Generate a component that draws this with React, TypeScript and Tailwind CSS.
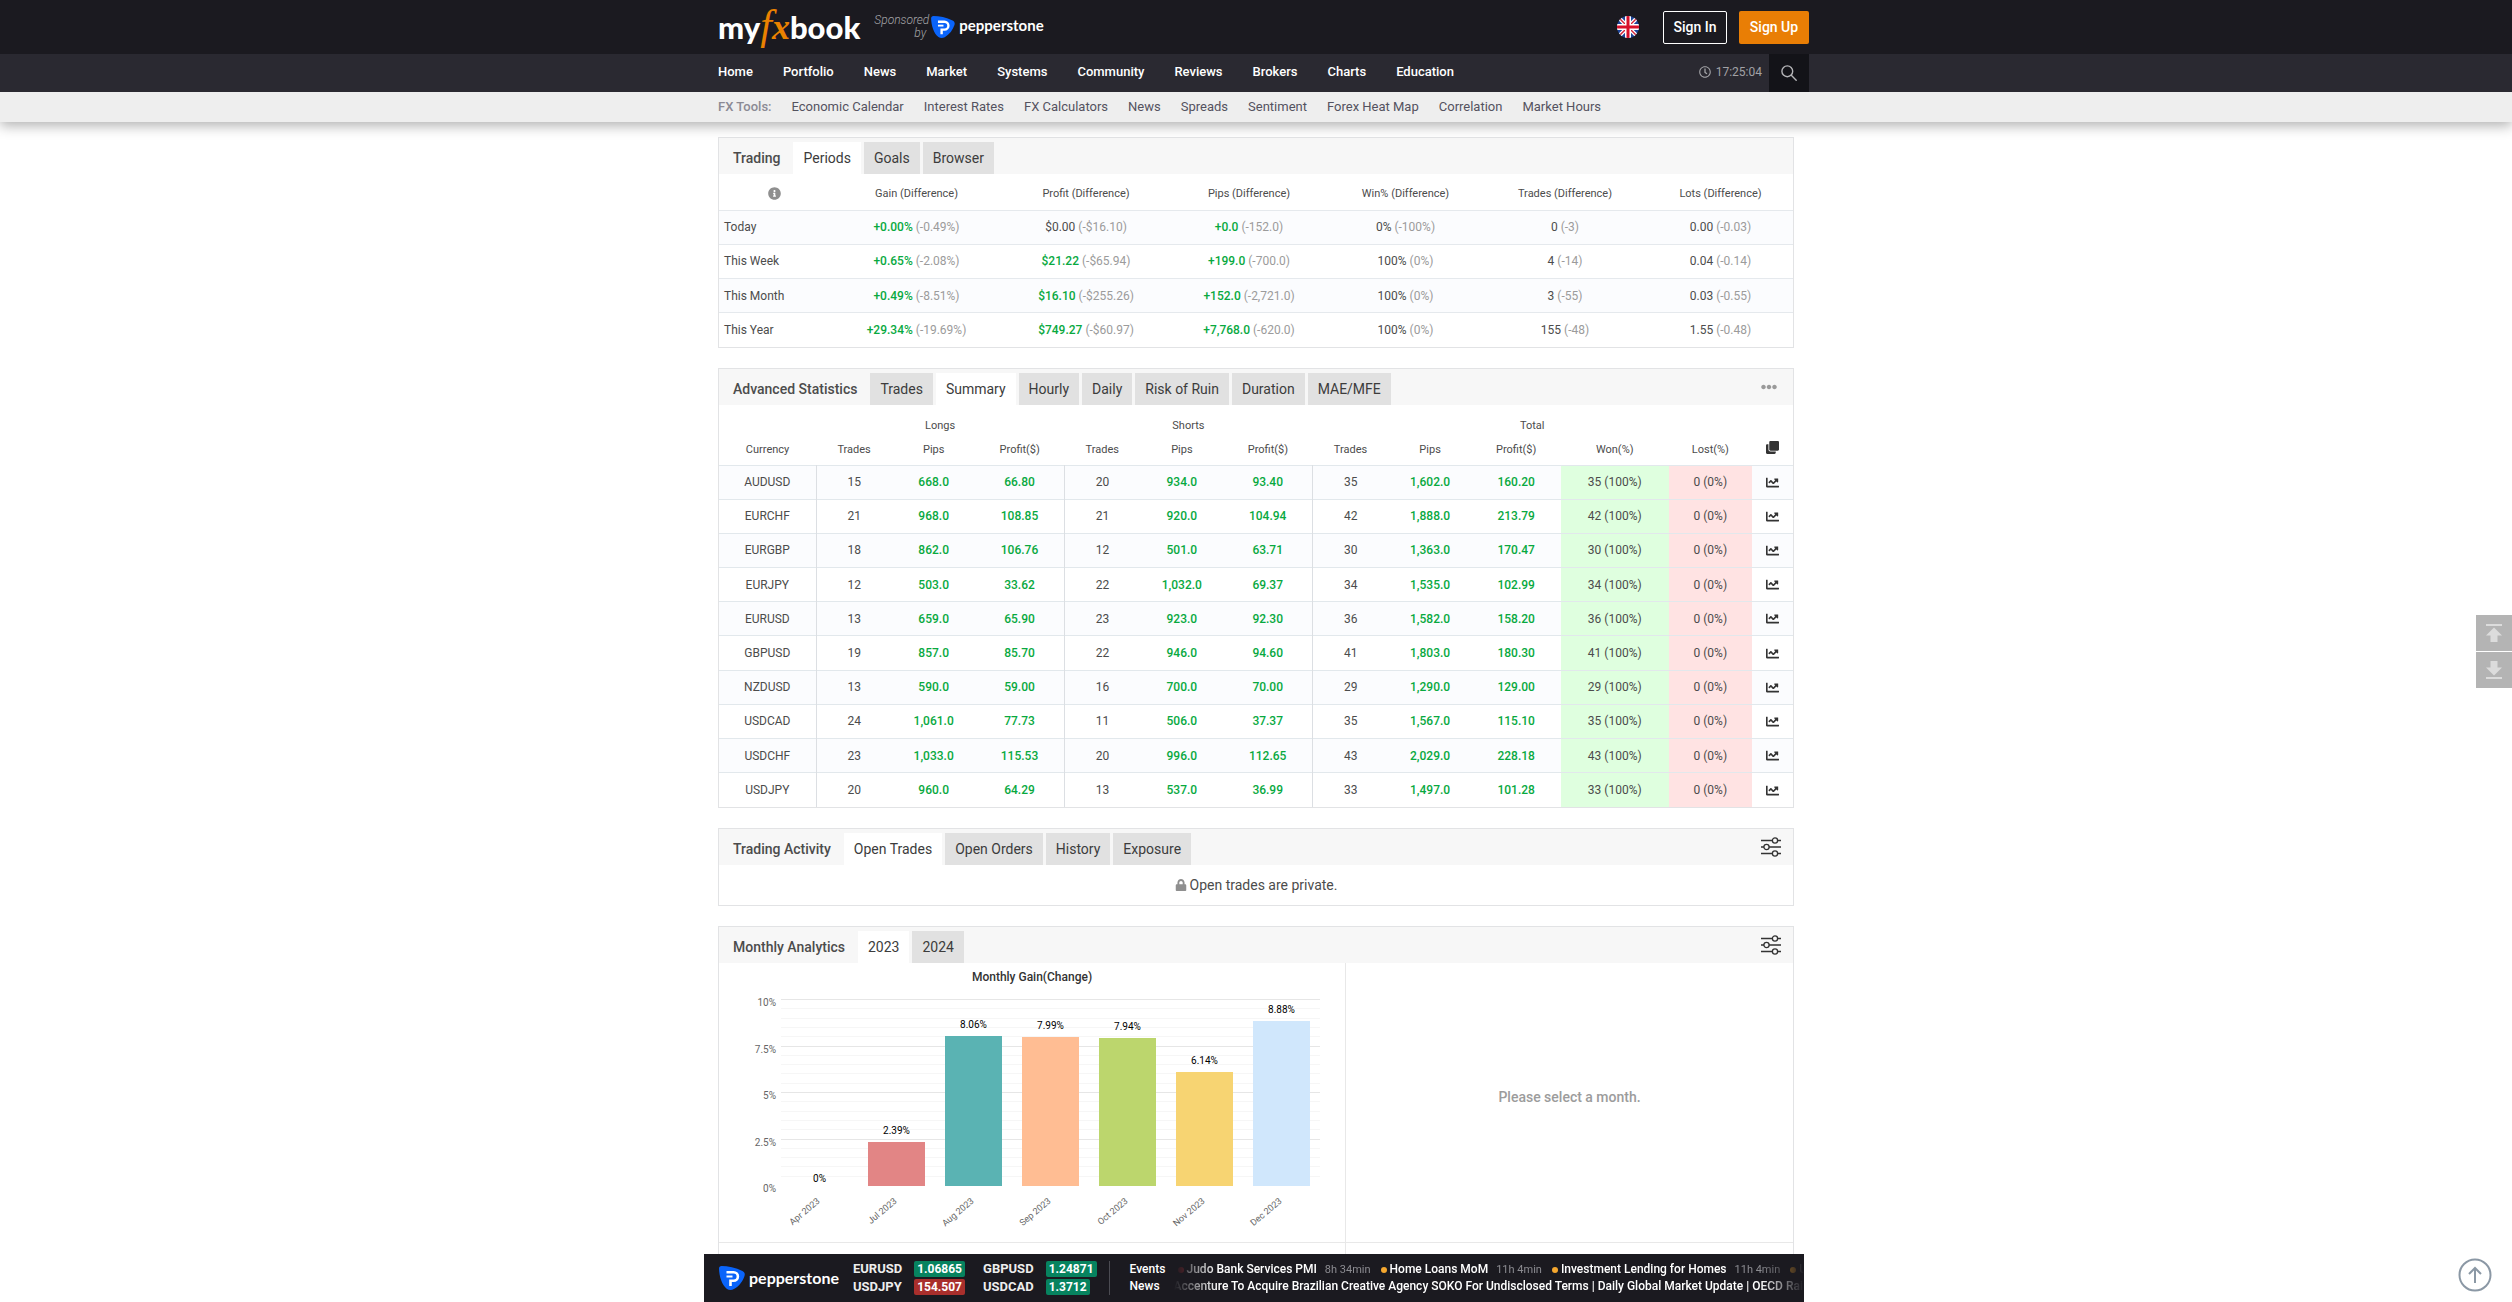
import { FaChartLine, FaClone, FaEllipsisH, FaInfoCircle, FaLock, FaRegClock } from 'react-icons/fa'

// ── Data ──
const NAV = ['Home', 'Portfolio', 'News', 'Market', 'Systems', 'Community', 'Reviews', 'Brokers', 'Charts', 'Education']
const TOOLS = [
  'Economic Calendar', 'Interest Rates', 'FX Calculators', 'News', 'Spreads',
  'Sentiment', 'Forex Heat Map', 'Correlation', 'Market Hours',
]

const PERIOD_HEADS = ['Gain', 'Profit', 'Pips', 'Win%', 'Trades', 'Lots']
const PERIODS = [
  { name: 'Today', cells: [['+0.00%', '-0.49%'], ['$0.00', '-$16.10'], ['+0.0', '-152.0'], ['0%', '-100%'], ['0', '-3'], ['0.00', '-0.03']] },
  { name: 'This Week', cells: [['+0.65%', '-2.08%'], ['$21.22', '-$65.94'], ['+199.0', '-700.0'], ['100%', '0%'], ['4', '-14'], ['0.04', '-0.14']] },
  { name: 'This Month', cells: [['+0.49%', '-8.51%'], ['$16.10', '-$255.26'], ['+152.0', '-2,721.0'], ['100%', '0%'], ['3', '-55'], ['0.03', '-0.55']] },
  { name: 'This Year', cells: [['+29.34%', '-19.69%'], ['$749.27', '-$60.97'], ['+7,768.0', '-620.0'], ['100%', '0%'], ['155', '-48'], ['1.55', '-0.48']] },
]

// currency, longs (trades, pips, profit), shorts (...), total (...)
const SUMMARY = [
  ['AUDUSD', '15', '668.0', '66.80', '20', '934.0', '93.40', '35', '1,602.0', '160.20'],
  ['EURCHF', '21', '968.0', '108.85', '21', '920.0', '104.94', '42', '1,888.0', '213.79'],
  ['EURGBP', '18', '862.0', '106.76', '12', '501.0', '63.71', '30', '1,363.0', '170.47'],
  ['EURJPY', '12', '503.0', '33.62', '22', '1,032.0', '69.37', '34', '1,535.0', '102.99'],
  ['EURUSD', '13', '659.0', '65.90', '23', '923.0', '92.30', '36', '1,582.0', '158.20'],
  ['GBPUSD', '19', '857.0', '85.70', '22', '946.0', '94.60', '41', '1,803.0', '180.30'],
  ['NZDUSD', '13', '590.0', '59.00', '16', '700.0', '70.00', '29', '1,290.0', '129.00'],
  ['USDCAD', '24', '1,061.0', '77.73', '11', '506.0', '37.37', '35', '1,567.0', '115.10'],
  ['USDCHF', '23', '1,033.0', '115.53', '20', '996.0', '112.65', '43', '2,029.0', '228.18'],
  ['USDJPY', '20', '960.0', '64.29', '13', '537.0', '36.99', '33', '1,497.0', '101.28'],
]

const MONTHS = [
  { name: 'Apr 2023', gain: 0, color: '#E08283' },
  { name: 'Jul 2023', gain: 2.39, color: '#E28585' },
  { name: 'Aug 2023', gain: 8.06, color: '#5AB3B3' },
  { name: 'Sep 2023', gain: 7.99, color: '#FFBD93' },
  { name: 'Oct 2023', gain: 7.94, color: '#BCD66D' },
  { name: 'Nov 2023', gain: 6.14, color: '#F7D472' },
  { name: 'Dec 2023', gain: 8.88, color: '#D0E7FC' },
]

const EVENTS = [
  { name: 'Judo Bank Services PMI', time: '8h 34min', dot: 'bg-[#d9363e]' },
  { name: 'Home Loans MoM', time: '11h 4min', dot: 'bg-[#f5a72f]' },
  { name: 'Investment Lending for Homes', time: '11h 4min', dot: 'bg-[#f5a72f]' },
  { name: 'Unemployment Rate', time: '11h 4min', dot: 'bg-[#f5a72f]' },
]
const NEWS = [
  'Accenture To Acquire Brazilian Creative Agency SOKO For Undisclosed Terms',
  'Daily Global Market Update',
  'OECD Raises Global Growth Outlook',
]

// ── Logos and icons ──
function Shield({ className }: { className: string }) {
  return (
    <svg viewBox="0 0 26 24" className={className} aria-hidden="true">
      <path d="M2.6 0C8.600 0 17 1.600 23.400 4.900C25.600 6 26.200 7.600 25.500 9.900C23.800 15.300 20 20.300 14.900 23.100C12.600 24.300 10.200 24.300 8 22.900C3 19.300.200 10 0 2.700C0 1 .900 0 2.600 0Z" fill="#0A64FA" />
      <path d="M7.500 6.200H14.600A4 4 0 0 1 14.600 14.800H11.500V20" fill="none" stroke="#fff" strokeWidth="2.600" />
      <path d="M7.500 10.500H13.500" stroke="#fff" strokeWidth="2" />
    </svg>
  )
}

function UkFlag() {
  return (
    <svg viewBox="0 0 22 22" className="size-[22px]" aria-hidden="true">
      <clipPath id="flag"><circle cx="11" cy="11" r="11" /></clipPath>
      <g clipPath="url(#flag)">
        <rect width="22" height="22" fill="#1B4398" />
        <path d="M0 0L22 22M22 0L0 22" stroke="#fff" strokeWidth="4" />
        <path d="M0 0L22 22M22 0L0 22" stroke="#D22238" strokeWidth="1.400" />
        <path d="M11 0V22M0 11H22" stroke="#fff" strokeWidth="6" />
        <path d="M11 0V22M0 11H22" stroke="#D8102A" strokeWidth="3" />
      </g>
    </svg>
  )
}

function SearchIcon() {
  return (
    <svg viewBox="0 0 16 16" className="size-4" fill="none" stroke="#b5b5b8" strokeWidth="1.400" strokeLinecap="round" aria-hidden="true">
      <circle cx="6.300" cy="6.300" r="5.400" />
      <path d="M10.300 10.300L15.200 15.200" />
    </svg>
  )
}

function Sliders() {
  return (
    <svg viewBox="0 0 20 20" className="size-5" fill="none" stroke="#333" strokeWidth="1.300" aria-hidden="true">
      <path d="M0 3.500H11.500M16.500 3.500H20M0 10H3M8 10H20M0 16.500H11.500M16.500 16.500H20" />
      <circle cx="14" cy="3.500" r="2.600" />
      <circle cx="5.500" cy="10" r="2.600" />
      <circle cx="14" cy="16.500" r="2.600" />
    </svg>
  )
}

function EndArrow({ down }: { down?: boolean }) {
  return (
    <svg viewBox="0 0 16 18" className={down ? 'h-[18px] w-4 rotate-180' : 'h-[18px] w-4'} fill="#dcdcdc" aria-hidden="true">
      <rect width="16" height="2" />
      <path d="M8 3.500L16 11.500H11.500V18H4.500V11.500H0Z" />
    </svg>
  )
}

// ── Panel with its tab strip ──
function Panel({ title, tabs, active, action, children }: {
  title: string
  tabs: string[]
  active: string
  action?: React.ReactNode
  children: React.ReactNode
}) {
  return (
    <section className="border border-[#e2e3e5] bg-white">
      <div className="flex items-end bg-[#f7f7f7] pt-1">
        <h2 className="self-center pr-[13px] pl-[14px] text-sm font-medium">{title}</h2>
        <div role="tablist" className="flex gap-[3px]">
          {tabs.map((t) => (
            <button
              key={t}
              role="tab"
              aria-selected={t === active}
              className={`h-8 px-[10px] text-sm text-[#3c3c3c] ${t === active ? 'bg-white' : 'bg-[#e1e1e1]'}`}
            >
              {t}
            </button>
          ))}
        </div>
        <div className="ml-auto self-center pr-3 pb-1">{action}</div>
      </div>
      {children}
    </section>
  )
}

function PeriodsTable() {
  return (
    <table className="h-[173px] w-full table-fixed border-collapse text-center text-xs">
      <colgroup>
        <col className="w-[111px]" />
        <col className="w-[173px]" />
        <col className="w-[166px]" />
        <col className="w-[160px]" />
        <col className="w-[153px]" />
        <col className="w-[166px]" />
        <col className="w-[145px]" />
      </colgroup>
      <thead>
        <tr className="h-9 text-[11px]">
          <th className="pt-1"><FaInfoCircle className="mx-auto size-[13px] text-[#8f8f8f]" title="Info" /></th>
          {PERIOD_HEADS.map((h) => (
            <th key={h} className="pt-1.5 font-normal">{h} (Difference)</th>
          ))}
        </tr>
      </thead>
      <tbody>
        {PERIODS.map((row) => (
          <tr key={row.name} className="h-[34px] border-t border-[#e5e9ed] odd:bg-[#fbfcfe]">
            <td className="pl-[5px] text-left">{row.name}</td>
            {row.cells.map(([value, diff], i) => (
              <td key={i}>
                <span className={i < 3 && value !== '$0.00' ? 'font-medium text-[#09a93f]' : ''}>{value}</span>{' '}
                <span className="text-[#9b9b9b]">({diff})</span>
              </td>
            ))}
          </tr>
        ))}
      </tbody>
    </table>
  )
}

function SummaryTable() {
  return (
    <table className="h-[402px] w-full table-fixed border-collapse text-center text-xs">
      <colgroup>
        <col className="w-[97px]" />
        {[0, 1, 2].map((g) => [
          <col key={`t${g}`} className="w-[76px]" />,
          <col key={`p${g}`} className="w-[83px]" />,
          <col key={`m${g}`} className="w-[89px]" />,
        ])}
        <col className="w-[108px]" />
        <col className="w-[83px]" />
        <col className="w-[41px]" />
      </colgroup>
      <thead className="text-[11px] leading-4">
        <tr className="h-8 align-bottom">
          <th />
          <th colSpan={3} className="pb-[3px] font-normal">Longs</th>
          <th colSpan={3} className="pb-[3px] font-normal">Shorts</th>
          <th colSpan={5} className="pb-[3px] font-normal">Total</th>
          <th />
        </tr>
        <tr className="h-7 align-top">
          {['Currency', 'Trades', 'Pips', 'Profit($)', 'Trades', 'Pips', 'Profit($)', 'Trades', 'Pips', 'Profit($)', 'Won(%)', 'Lost(%)'].map((h, i) => (
            <th key={i} className="pt-[5px] font-normal">{h}</th>
          ))}
          <th className="pt-1"><FaClone className="mx-auto size-[13px] text-[#333]" title="Copy" /></th>
        </tr>
      </thead>
      <tbody>
        {SUMMARY.map((row) => (
          <tr key={row[0]} className="h-[34px] border-t border-[#e2e8ec] odd:bg-[#fbfcfe]">
            {row.map((value, i) => (
              <td
                key={i}
                className={`${i % 3 === 0 && i < 9 ? 'border-r border-[#dcdfe3]' : ''} ${i > 0 && i % 3 !== 1 ? 'font-medium text-[#09a93f]' : ''}`}
              >
                {value}
              </td>
            ))}
            <td className="bg-[#dfffdf]">{row[7]} (100%)</td>
            <td className="bg-[#ffe3e3]">0 (0%)</td>
            <td><FaChartLine className="mx-auto size-[13px] text-[#333]" title="Chart" /></td>
          </tr>
        ))}
      </tbody>
    </table>
  )
}

// ── Monthly gain chart ──
const PLOT = { left: 62, right: 601, top: 37, bottom: 223 }

function MonthlyChart() {
  const yOf = (v: number) => PLOT.bottom - (v / 10) * (PLOT.bottom - PLOT.top)
  const slot = (PLOT.right - PLOT.left) / MONTHS.length
  const minor = Array.from({ length: 20 }, (_, i) => (i + 1) / 2).filter((v) => v % 2.5 !== 0)
  return (
    <svg viewBox="0 0 626 279" className="block w-full" role="img" aria-label="Monthly Gain(Change)">
      <text x="313" y="18" textAnchor="middle" className="fill-[#333] text-[12px] font-medium">Monthly Gain(Change)</text>
      {minor.map((v) => (
        <path key={v} d={`M${PLOT.left} ${Math.round(yOf(v)) - 0.5}H${PLOT.right}`} stroke="#f6f6f6" />
      ))}
      {[0, 2.5, 5, 7.5, 10].map((v) => (
        <g key={v}>
          {v > 0 && <path d={`M${PLOT.left} ${Math.round(yOf(v)) - 0.5}H${PLOT.right}`} stroke="#e6e6e6" />}
          <text x="57" y={Math.round(yOf(v)) + 6} textAnchor="end" className="fill-[#666] text-[10px]">{v}%</text>
        </g>
      ))}
      {MONTHS.map((m, i) => {
        const cx = PLOT.left + slot * (i + 0.5)
        const top = Math.round(yOf(m.gain))
        return (
          <g key={m.name}>
            <rect x={Math.round(cx) - 29} y={top} width="57" height={PLOT.bottom - top} fill={m.color} />
            <text x={cx} y={top - (m.gain ? 8 : 4)} textAnchor="middle" className="fill-black text-[10px]">{m.gain}%</text>
            <text transform={`translate(${cx + 1} 239) rotate(-40)`} textAnchor="end" className="fill-[#666] text-[9px]">{m.name}</text>
          </g>
        )
      })}
    </svg>
  )
}

// ── Ticker ──
function Rate({ pair, value, down }: { pair: string; value: string; down?: boolean }) {
  return (
    <tr>
      <th className="pr-3 pb-[2px] text-left text-[13px] leading-4 font-bold text-[#ededed]">{pair}</th>
      <td className="pb-[2px]">
        <span className={`block w-fit rounded-xs px-[3px] leading-4 font-bold text-white ${down ? 'bg-[#a92f2c]' : 'bg-[#07835f]'}`}>{value}</span>
      </td>
    </tr>
  )
}

function Ticker() {
  return (
    <footer className="fixed right-1 bottom-0 left-0 mx-auto flex h-12 max-w-[1100px] items-start bg-[#1b1a20] pt-[7px] pl-[15px] text-xs">
      <a href="#" className="flex items-center gap-1 pt-[5px] text-base font-bold text-white">
        <Shield className="h-6 w-[26px]" />
        <span className="font-['Lato',sans-serif] leading-5">pepperstone</span>
      </a>
      <div className="ml-[14px] flex gap-[18px]">
        <table><tbody>
          <Rate pair="EURUSD" value="1.06865" />
          <Rate pair="USDJPY" value="154.507" down />
        </tbody></table>
        <table><tbody>
          <Rate pair="GBPUSD" value="1.24871" />
          <Rate pair="USDCAD" value="1.3712" />
        </tbody></table>
      </div>
      <div className="ml-3 flex min-w-0 flex-1 border-l border-[#4b4b52] pl-5 font-medium whitespace-nowrap text-white">
        <div className="w-11 shrink-0 leading-[17px]">
          <p>Events</p>
          <p>News</p>
        </div>
        <div className="min-w-0 flex-1 overflow-hidden mask-[linear-gradient(to_right,transparent,black_44px,black_calc(100%-44px),transparent)] leading-[17px]">
          <p className="flex pl-1">
            {EVENTS.map((e) => (
              <span key={e.name} className="mr-[10px] flex items-center">
                <span className={`mr-[3px] size-[6px] rounded-full ${e.dot}`} />
                {e.name}
                <span className="ml-2 text-[11px] font-normal text-[#8c8c91]">{e.time}</span>
              </span>
            ))}
          </p>
          <p>{NEWS.join(' | ')}</p>
        </div>
      </div>
    </footer>
  )
}

function Header() {
  return (
    <header className="relative shadow-[0_4px_12px_rgba(0,0,0,0.3)]">
      <div className="bg-[#1b1a20]">
        <div className="mx-auto flex h-[54px] max-w-[1106px] items-center pl-[15px]">
          <a href="#" className="flex h-[54px] items-baseline font-['Lato',sans-serif] text-[31px] leading-[50px] font-black text-white" aria-label="myfxbook">
            <span>my</span>
            <span className="-ml-1 flex items-baseline font-['Liberation_Serif',serif] font-normal text-[#ea8200] italic">
              <span className="px-1 text-[42px]">f</span>
              <span className="-ml-1 text-[36px] font-bold">x</span>
            </span>
            <span>book</span>
          </a>
          <span className="ml-[14px] w-[52px] text-right text-xs leading-[13px] font-light text-[#a5a5a8] italic">Sponsored by</span>
          <a href="#" className="ml-[5px] flex items-center gap-1 text-[15px] font-bold text-white">
            <Shield className="h-[22px] w-6" />
            <span className="pb-1 font-['Lato',sans-serif]">pepperstone</span>
          </a>
          <button className="mr-6 ml-auto" aria-label="Language"><UkFlag /></button>
          <button className="mr-3 h-[33px] w-16 rounded-xs border border-white text-sm font-medium text-white">Sign In</button>
          <button className="h-[33px] w-[70px] rounded-xs bg-[#e97e05] text-sm font-medium text-white">Sign Up</button>
        </div>
      </div>
      <div className="bg-[#2a2931]">
        <div className="mx-auto flex h-[38px] max-w-[1106px] items-center pl-[15px]">
          <nav className="flex gap-[30px] pb-[2px] text-[13px] font-medium text-white">
            {NAV.map((n) => <a key={n} href="#">{n}</a>)}
          </nav>
          <div className="mr-[7px] ml-auto flex items-center gap-[5px] pb-[3px] text-xs text-[#a2a2a6]">
            <FaRegClock className="size-3" />
            <time>17:25:04</time>
          </div>
          <button className="flex h-[38px] w-10 items-center justify-center bg-[#131318]" aria-label="Search"><SearchIcon /></button>
        </div>
      </div>
      <div className="bg-[#eee]">
        <nav className="mx-auto flex h-[30px] max-w-[1106px] items-center gap-5 pl-[15px] text-[13px] text-[#54525f]">
          <span className="font-medium text-[#8b8a94]">FX Tools:</span>
          {TOOLS.map((t) => <a key={t} href="#">{t}</a>)}
        </nav>
      </div>
    </header>
  )
}

export default function App() {
  return (
    <div className="bg-white font-['Roboto',sans-serif] text-[#4c4c4c]">
      <Header />
      <main className="mx-auto flex max-w-[1106px] flex-col gap-5 px-[15px] pt-[15px]">
        <Panel title="Trading" tabs={['Periods', 'Goals', 'Browser']} active="Periods">
          <PeriodsTable />
        </Panel>
        <Panel
          title="Advanced Statistics"
          tabs={['Trades', 'Summary', 'Hourly', 'Daily', 'Risk of Ruin', 'Duration', 'MAE/MFE']}
          active="Summary"
          action={<button className="mr-1 block" aria-label="More"><FaEllipsisH className="size-4 text-[#9a9a9a]" /></button>}
        >
          <SummaryTable />
        </Panel>
        <Panel
          title="Trading Activity"
          tabs={['Open Trades', 'Open Orders', 'History', 'Exposure']}
          active="Open Trades"
          action={<button className="block" aria-label="Settings"><Sliders /></button>}
        >
          <p className="flex h-10 items-center justify-center gap-[3px] text-sm">
            <FaLock className="size-3 text-[#8f8f8f]" />
            Open trades are private.
          </p>
        </Panel>
        <Panel
          title="Monthly Analytics"
          tabs={['2023', '2024']}
          active="2023"
          action={<button className="block" aria-label="Settings"><Sliders /></button>}
        >
          <div className="grid grid-cols-[627fr_447fr]">
            <div className="border-r border-b border-[#e8e8e8]"><MonthlyChart /></div>
            <div className="flex items-center justify-center border-b border-[#e8e8e8] pb-3 text-sm font-medium text-[#9c9c9c]">
              Please select a month.
            </div>
            <div className="h-14 border-r border-[#e8e8e8]" />
          </div>
        </Panel>
      </main>

      <div className="fixed top-[615px] right-0 flex flex-col gap-px">
        <button className="flex size-9 items-center justify-center bg-[#b4b4b4]" aria-label="Scroll to top"><EndArrow /></button>
        <button className="flex size-9 items-center justify-center bg-[#b4b4b4]" aria-label="Scroll to bottom"><EndArrow down /></button>
      </div>
      <button className="fixed right-5 bottom-[10px]" aria-label="Back to top">
        <svg viewBox="0 0 34 34" className="size-[34px]" fill="none" stroke="#8b98a5" strokeWidth="2" aria-hidden="true">
          <circle cx="17" cy="17" r="15.500" />
          <path d="M17 25V10M11 16L17 10L23 16" />
        </svg>
      </button>
      <Ticker />
    </div>
  )
}
